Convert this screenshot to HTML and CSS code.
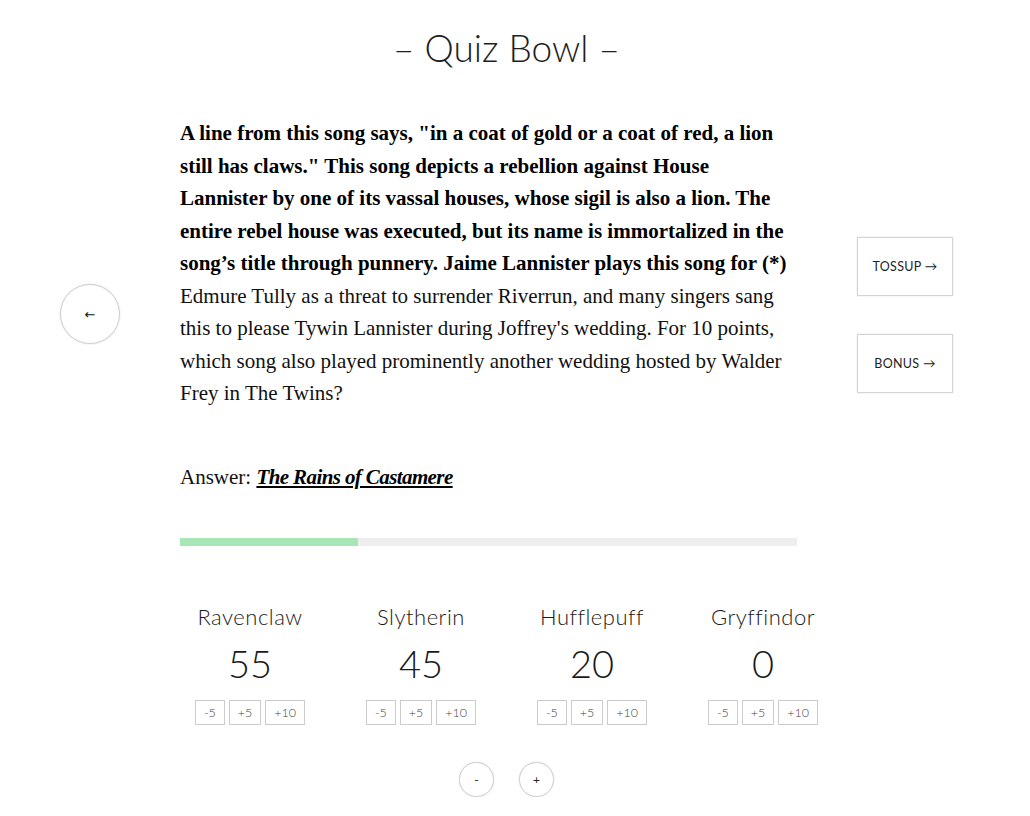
FILE: index.html
```html
<!DOCTYPE html>
<html lang="en">
<head>
<meta charset="utf-8">
<title>Quiz Bowl</title>
<link rel="stylesheet" href="styles.css">
</head>
<body>
<div class="page">
  <h1 class="title">– Quiz Bowl –</h1>

  <div class="stage">
    <div class="nav-left">
      <button class="circle-btn back" type="button">←</button>
    </div>

    <div class="main">
      <p class="question"><strong>A line from this song says, "in a coat of gold or a coat of red, a lion still has claws." This song depicts a rebellion against House Lannister by one of its vassal houses, whose sigil is also a lion. The entire rebel house was executed, but its name is immortalized in the song’s title through punnery. Jaime Lannister plays this song for (*)</strong> Edmure Tully as a threat to surrender Riverrun, and many singers sang this to please Tywin Lannister during Joffrey's wedding. For 10 points, which song also played prominently another wedding hosted by Walder Frey in The Twins?</p>

      <p class="answer">Answer: <span class="answer-text">The Rains of Castamere</span></p>

      <div class="progress"><div class="progress-fill" style="width: 28.9%"></div></div>
    </div>

    <div class="nav-right">
      <button class="box-btn" type="button">Tossup →</button>
      <button class="box-btn" type="button">Bonus →</button>
    </div>
  </div>

  <div class="teams">
    <div class="team">
      <div class="team-name">Ravenclaw</div>
      <div class="team-score">55</div>
      <div class="team-actions"><button class="pt-btn">-5</button><button class="pt-btn">+5</button><button class="pt-btn">+10</button></div>
    </div>
    <div class="team">
      <div class="team-name">Slytherin</div>
      <div class="team-score">45</div>
      <div class="team-actions"><button class="pt-btn">-5</button><button class="pt-btn">+5</button><button class="pt-btn">+10</button></div>
    </div>
    <div class="team">
      <div class="team-name">Hufflepuff</div>
      <div class="team-score">20</div>
      <div class="team-actions"><button class="pt-btn">-5</button><button class="pt-btn">+5</button><button class="pt-btn">+10</button></div>
    </div>
    <div class="team">
      <div class="team-name">Gryffindor</div>
      <div class="team-score">0</div>
      <div class="team-actions"><button class="pt-btn">-5</button><button class="pt-btn">+5</button><button class="pt-btn">+10</button></div>
    </div>
  </div>

  <div class="team-count">
    <button class="circle-btn small" type="button">-</button>
    <button class="circle-btn small" type="button">+</button>
  </div>
</div>
</body>
</html>
```

FILE: styles.css
```css
* { box-sizing: border-box; }

html, body {
  margin: 0;
  padding: 0;
  background: #ffffff;
}

body {
  font-family: "Lato", "DejaVu Sans", sans-serif;
  color: #1a1a1a;
}

.page {
  width: 1013px;
}

button {
  font-family: "Lato", "DejaVu Sans", sans-serif;
  background: #ffffff;
  color: #333;
  cursor: pointer;
  padding: 0;
}

.title {
  margin: 0;
  padding-top: 25px;
  font-size: 37px;
  line-height: 46px;
  font-weight: 300;
  letter-spacing: 0;
  text-align: center;
  color: #1e1e1e;
}

.stage {
  margin-top: 46px;
  display: grid;
  grid-template-columns: 180px 617px 216px;
  align-items: start;
}

.nav-left {
  display: flex;
  justify-content: center;
  padding-top: 167px;
}

.circle-btn {
  border: 1px solid #cfcfcf;
  border-radius: 50%;
  box-shadow: 0 0 2px rgba(0,0,0,0.12);
  display: flex;
  align-items: center;
  justify-content: center;
}

.circle-btn.back {
  width: 60px;
  height: 60px;
  font-size: 13px;
  color: #111;
  font-family: "DejaVu Sans", sans-serif;
}

.main {
  min-width: 0;
}

.question {
  margin: 0;
  font-family: "Liberation Serif", "Times New Roman", serif;
  font-size: 21px;
  line-height: 32.5px;
  color: #111;
}

.question strong {
  font-weight: 700;
  color: #000;
}

.answer {
  margin: 51px 0 0;
  font-family: "Liberation Serif", "Times New Roman", serif;
  font-size: 21px;
  line-height: 32.5px;
  color: #111;
}

.answer-text {
  font-weight: 700;
  font-style: italic;
  text-decoration: underline;
  letter-spacing: -0.6px;
  color: #000;
}

.progress {
  margin-top: 45px;
  height: 8px;
  background: #eeeeee;
}

.progress-fill {
  height: 100%;
  background: #a8e6b5;
}

.nav-right {
  display: flex;
  flex-direction: column;
  align-items: center;
  gap: 38px;
  padding-top: 120px;
}

.box-btn {
  width: 96px;
  height: 59px;
  border: 1px solid #d4d4d4;
  box-shadow: 0 0 2px rgba(0,0,0,0.10);
  font-size: 12.5px;
  font-weight: 400;
  text-transform: uppercase;
  letter-spacing: 0.3px;
  color: #222;
}

.teams {
  width: 684px;
  margin: 57px auto 0;
  display: grid;
  grid-template-columns: repeat(4, 1fr);
}

.team {
  display: flex;
  flex-direction: column;
  align-items: center;
}

.team-name {
  font-size: 22px;
  line-height: 28px;
  font-weight: 300;
  color: #1a1a1a;
  letter-spacing: 0.5px;
}

.team-score {
  margin-top: 9px;
  font-size: 38px;
  line-height: 46px;
  font-weight: 300;
  color: #1a1a1a;
}

.team-actions {
  margin-top: 14px;
  display: flex;
  gap: 4px;
}

.pt-btn {
  height: 25px;
  padding: 0 8px;
  border: 1px solid #cccccc;
  font-size: 12.5px;
  font-weight: 300;
  color: #444;
}

.team-count {
  margin-top: 37px;
  display: flex;
  justify-content: center;
  gap: 25px;
}

.circle-btn.small {
  width: 35px;
  height: 35px;
  font-size: 12px;
  color: #222;
}
```
